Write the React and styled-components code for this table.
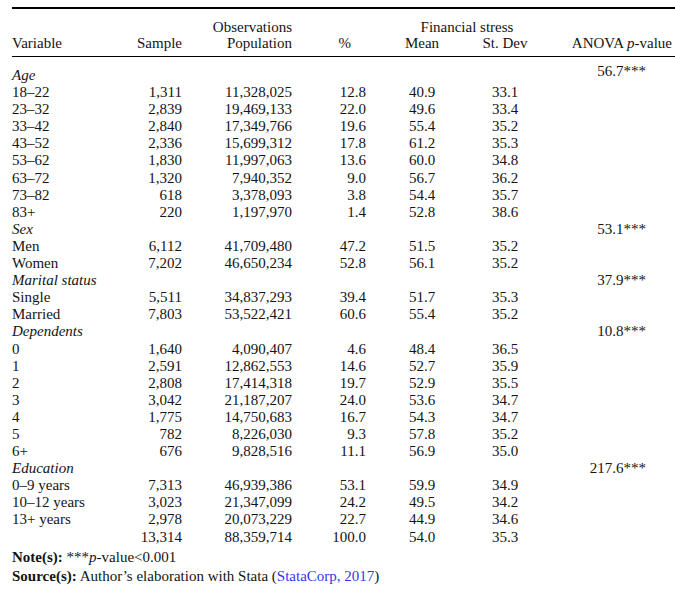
import styled, { createGlobalStyle } from "styled-components";

const GlobalStyle = createGlobalStyle`
  html, body {
    margin: 0;
    padding: 0;
    background: #fff;
  }
  body {
    font-family: "Liberation Serif", "Times New Roman", serif;
    font-size: 15px;
    color: #141414;
  }
`;

const COLS = "118px 52px 110px 74px 112px 54px 1fr";

const Page = styled.div`
  padding: 7px 0 0 12px;
`;

const Table = styled.div`
  border-top: 2px solid #000;
`;

const Head = styled.div`
  display: grid;
  grid-template-columns: ${COLS};
  grid-template-rows: 16px 16px;
  align-items: center;
  padding: 10px 0 5px;
  border-bottom: 1px solid #000;
  line-height: 16px;
`;

const HeadCell = styled.div`
  grid-column: ${(p) => p.$col};
  grid-row: ${(p) => p.$row};
  text-align: ${(p) => p.$align || "left"};
  padding-left: ${(p) => p.$pl || 0}px;
  padding-right: ${(p) => p.$pr || 0}px;
  white-space: nowrap;
`;

const Body = styled.div`
  padding-top: 10px;
`;

const Row = styled.div`
  display: grid;
  grid-template-columns: ${COLS};
  line-height: 17.1px;
  height: 17.1px;
`;

const Label = styled.div`
  font-style: ${(p) => (p.$italic ? "italic" : "normal")};
  white-space: nowrap;
`;

const Num = styled.div`
  text-align: right;
  white-space: nowrap;
`;

const Mid = styled.div`
  text-align: center;
  white-space: nowrap;
`;

const Anova = styled.div`
  text-align: right;
  padding-right: 29px;
  white-space: nowrap;
  grid-column: 7;
  position: relative;
  top: ${(p) => p.$shift || 0}px;
`;

const Notes = styled.div`
  margin-top: 2px;
  line-height: 19px;
`;

const NoteLine = styled.div`
  white-space: nowrap;
`;

const Bold = styled.b`
  font-weight: 700;
`;

const Ref = styled.span`
  color: #3535f5;
`;

const groups = [
  {
    name: "Age",
    anova: "56.7***",
    shift: -4,
    rows: [
      ["18–22", "1,311", "11,328,025", "12.8", "40.9", "33.1"],
      ["23–32", "2,839", "19,469,133", "22.0", "49.6", "33.4"],
      ["33–42", "2,840", "17,349,766", "19.6", "55.4", "35.2"],
      ["43–52", "2,336", "15,699,312", "17.8", "61.2", "35.3"],
      ["53–62", "1,830", "11,997,063", "13.6", "60.0", "34.8"],
      ["63–72", "1,320", "7,940,352", "9.0", "56.7", "36.2"],
      ["73–82", "618", "3,378,093", "3.8", "54.4", "35.7"],
      ["83+", "220", "1,197,970", "1.4", "52.8", "38.6"],
    ],
  },
  {
    name: "Sex",
    anova: "53.1***",
    rows: [
      ["Men", "6,112", "41,709,480", "47.2", "51.5", "35.2"],
      ["Women", "7,202", "46,650,234", "52.8", "56.1", "35.2"],
    ],
  },
  {
    name: "Marital status",
    anova: "37.9***",
    rows: [
      ["Single", "5,511", "34,837,293", "39.4", "51.7", "35.3"],
      ["Married", "7,803", "53,522,421", "60.6", "55.4", "35.2"],
    ],
  },
  {
    name: "Dependents",
    anova: "10.8***",
    rows: [
      ["0", "1,640", "4,090,407", "4.6", "48.4", "36.5"],
      ["1", "2,591", "12,862,553", "14.6", "52.7", "35.9"],
      ["2", "2,808", "17,414,318", "19.7", "52.9", "35.5"],
      ["3", "3,042", "21,187,207", "24.0", "53.6", "34.7"],
      ["4", "1,775", "14,750,683", "16.7", "54.3", "34.7"],
      ["5", "782", "8,226,030", "9.3", "57.8", "35.2"],
      ["6+", "676", "9,828,516", "11.1", "56.9", "35.0"],
    ],
  },
  {
    name: "Education",
    anova: "217.6***",
    rows: [
      ["0–9 years", "7,313", "46,939,386", "53.1", "59.9", "34.9"],
      ["10–12 years", "3,023", "21,347,099", "24.2", "49.5", "34.2"],
      ["13+ years", "2,978", "20,073,229", "22.7", "44.9", "34.6"],
      ["", "13,314", "88,359,714", "100.0", "54.0", "35.3"],
    ],
  },
];

function DataRow({ cells }) {
  const [label, sample, pop, pct, mean, sd] = cells;
  return (
    <Row>
      <Label>{label}</Label>
      <Num>{sample}</Num>
      <Num>{pop}</Num>
      <Num>{pct}</Num>
      <Mid>{mean}</Mid>
      <Mid>{sd}</Mid>
    </Row>
  );
}

export default function App() {
  return (
    <Page>
      <GlobalStyle />
      <Table>
        <Head>
          <HeadCell $col={3} $row={1} $align="right">
            Observations
          </HeadCell>
          <HeadCell $col="5 / 7" $row={1} $align="center" $pl={36}>
            Financial stress
          </HeadCell>
          <HeadCell $col={1} $row={2}>
            Variable
          </HeadCell>
          <HeadCell $col={2} $row={2} $align="right" $pr={-2}>
            Sample
          </HeadCell>
          <HeadCell $col={3} $row={2} $align="right">
            Population
          </HeadCell>
          <HeadCell $col={4} $row={2} $align="right" $pr={15}>
            %
          </HeadCell>
          <HeadCell $col={5} $row={2} $align="center">
            Mean
          </HeadCell>
          <HeadCell $col={6} $row={2} $align="center">
            St. Dev
          </HeadCell>
          <HeadCell $col={7} $row={2} $align="right" $pr={3}>
            ANOVA <i>p</i>-value
          </HeadCell>
        </Head>
        <Body>
          {groups.map((g) => (
            <div key={g.name}>
              <Row>
                <Label $italic>{g.name}</Label>
                <Anova $shift={g.shift}>{g.anova}</Anova>
              </Row>
              {g.rows.map((r, i) => (
                <DataRow key={i} cells={r} />
              ))}
            </div>
          ))}
        </Body>
      </Table>
      <Notes>
        <NoteLine>
          <Bold>Note(s):</Bold> ***<i>p</i>-value&lt;0.001
        </NoteLine>
        <NoteLine>
          <Bold>Source(s):</Bold> Author’s elaboration with Stata (
          <Ref>StataCorp, 2017</Ref>)
        </NoteLine>
      </Notes>
    </Page>
  );
}
